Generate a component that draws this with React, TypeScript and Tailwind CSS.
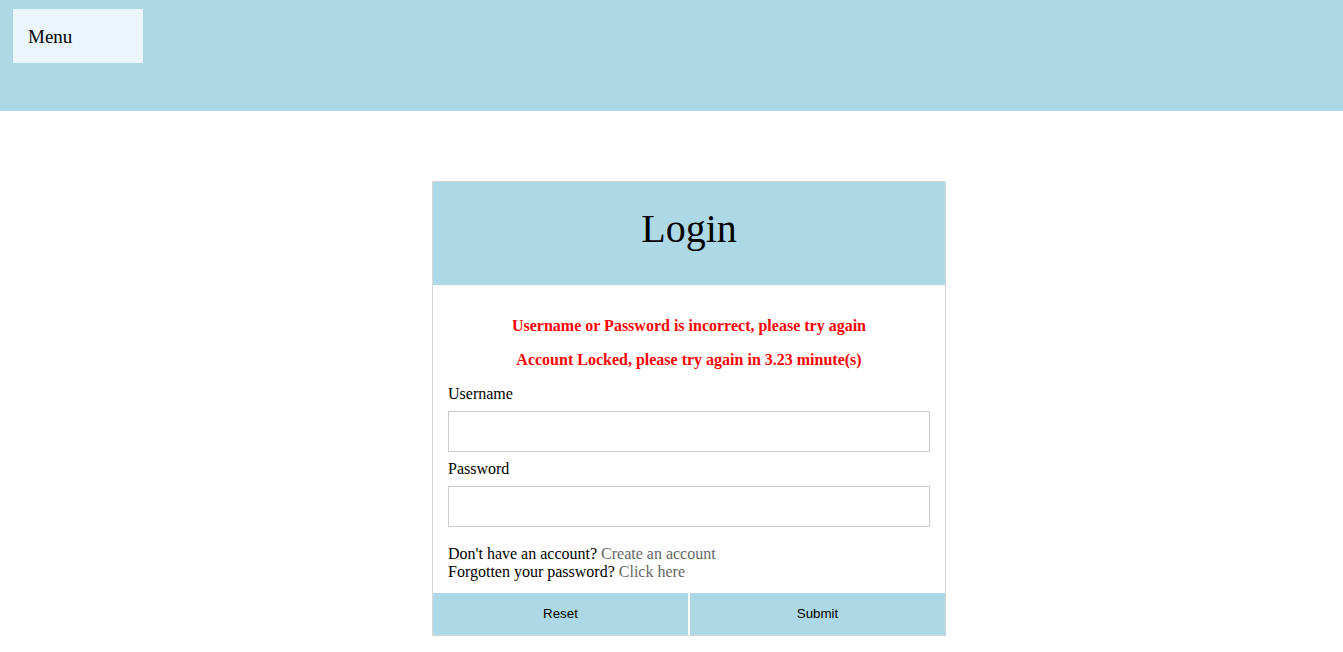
export default function App() {
  return (
    <div className="min-h-[652px] bg-white" style={{ fontFamily: '"Liberation Serif", "Times New Roman", serif' }}>
      <header className="h-[111px] bg-[#add8e6] pt-[9px] pl-[13px]">
        <div className="w-[130px] h-[54px] bg-[#eaf6f9] flex items-center pl-[15px] pt-[2px] text-[19px] text-black">Menu</div>
      </header>
      <div className="pt-[70px]">
        <div className="ml-[432px] w-[514px] border border-[#d6d6d6]">
          <div className="h-[103px] bg-[#add8e6] flex items-center justify-center">
            <h1 className="text-[40px] leading-none text-black pb-[10px]">Login</h1>
          </div>
          <div className="px-[15px] pt-[32px] pb-[12px]">
            <p className="text-center font-bold text-[16px] leading-[18px] text-[#ff0000]">Username or Password is incorrect, please try again</p>
            <p className="mt-[16px] text-center font-bold text-[16px] leading-[18px] text-[#ff0000]">Account Locked, please try again in 3.23 minute(s)</p>
            <label className="block mt-[16px] text-[16px] leading-[18px] text-black">Username</label>
            <input type="text" className="block mt-[8px] w-full h-[41px] border border-[#cccccc] bg-white outline-none" />
            <label className="block mt-[8px] text-[16px] leading-[18px] text-black">Password</label>
            <input type="password" className="block mt-[8px] w-full h-[41px] border border-[#cccccc] bg-white outline-none" />
            <div className="mt-[18px] text-[16px] leading-[18px] text-black">
              <div>Don't have an account? <a className="text-[#666666]">Create an account</a></div>
              <div>Forgotten your password? <a className="text-[#666666]">Click here</a></div>
            </div>
          </div>
          <div className="flex gap-[2px]">
            <button className="flex-1 h-[42px] bg-[#add8e6] text-[13.33px] text-black" style={{ fontFamily: '"Liberation Sans", Arial, sans-serif' }}>Reset</button>
            <button className="flex-1 h-[42px] bg-[#add8e6] text-[13.33px] text-black" style={{ fontFamily: '"Liberation Sans", Arial, sans-serif' }}>Submit</button>
          </div>
        </div>
      </div>
    </div>
  );
}
